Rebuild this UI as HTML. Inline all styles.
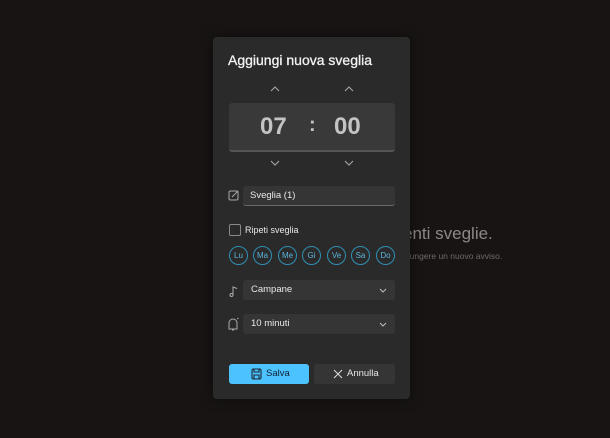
<!DOCTYPE html>
<html><head><style>
body{margin:0;width:610px;height:438px;background:#181414;overflow:hidden;font-family:"Liberation Sans",sans-serif;position:relative}
.a{position:absolute}
.dlg{left:213px;top:37px;width:197px;height:362px;background:#2b2a2a;border-radius:4px;box-shadow:0 0 12px rgba(0,0,0,.5)}
.inp{background:#363535;border-radius:3px;border-bottom:1px solid #6a6a6a;color:#e8e8e8;font-size:9.5px;box-sizing:border-box;padding-left:8px;line-height:20px}
.day{width:17px;height:17px;border:1px solid #2f8fb5;border-radius:50%;color:#5ab5dc;font-size:8px;text-align:center;line-height:17px;top:246px}
</style></head><body>
<div class="a" style="left:403px;top:224px;font-size:17px;color:#8c8888">enti sveglie.</div>
<div class="a" style="left:403px;top:251px;font-size:8.5px;color:#6e6a6a">giungere un nuovo avviso.</div>
<div class="a dlg"></div>
<div class="a" style="left:228px;top:52px;font-size:14px;color:#f2f2f2;-webkit-text-stroke:0.3px #f2f2f2">Aggiungi nuova sveglia</div>
<svg class="a" style="left:0;top:0" width="610" height="438">
<g fill="none" stroke="#aaa" stroke-width="1">
<path d="M271 91l4-4 4 4M345 91l4-4 4 4M271 161l4 4 4-4M345 161l4 4 4-4"/>
<rect x="229" y="191" width="9" height="9" rx="1.5"/><path d="M232 197l6-6" />
<path d="M233 295v-8l4 1.5" /><circle cx="231.5" cy="295" r="1.5"/>
<path d="M229 329v-6a4 4 0 0 1 8 0v6zM232 330h2M237 319l1.5-1"/>
</g>
</svg>
<div class="a" style="left:229px;top:103px;width:166px;height:47px;background:#3a3939;border-bottom:2px solid #555;border-radius:3px"></div>
<div class="a" style="left:260px;top:113px;font-size:24px;font-weight:bold;color:#c4c4c4">07</div>
<div class="a" style="left:309px;top:114px;font-size:20px;font-weight:bold;color:#c4c4c4">:</div>
<div class="a" style="left:334px;top:113px;font-size:24px;font-weight:bold;color:#c4c4c4">00</div>
<div class="a inp" style="left:243px;top:186px;width:152px;height:20px;padding-left:7px">Sveglia (1)</div>
<div class="a" style="left:229px;top:224px;width:10px;height:10px;border:1px solid #8a8a8a;border-radius:2px"></div>
<div class="a" style="left:245px;top:225px;font-size:9px;color:#e8e8e8">Ripeti sveglia</div>
<div class="a day" style="left:229px">Lu</div>
<div class="a day" style="left:253px">Ma</div>
<div class="a day" style="left:278px">Me</div>
<div class="a day" style="left:302px">Gi</div>
<div class="a day" style="left:327px">Ve</div>
<div class="a day" style="left:351px">Sa</div>
<div class="a day" style="left:376px">Do</div>
<div class="a inp" style="left:243px;top:280px;width:152px;height:20px;border:none">Campane</div>
<div class="a inp" style="left:243px;top:314px;width:152px;height:20px;border:none">10 minuti</div>
<div class="a" style="left:229px;top:364px;width:80px;height:20px;background:#4cc2ff;border-radius:3px;color:#102030;font-size:9.5px;line-height:20px;padding-left:37px;box-sizing:border-box">Salva</div>
<div class="a" style="left:314px;top:364px;width:81px;height:20px;background:#363535;border-radius:3px;color:#e8e8e8;font-size:9.5px;line-height:20px;padding-left:33px;box-sizing:border-box">Annulla</div>
<svg class="a" style="left:0;top:0" width="610" height="438"><g fill="none" stroke="#bbb"><path d="M380 289l3 3 3-3M380 323l3 3 3-3"/></g><g fill="none" stroke="#ddd"><path d="M334 370l8 8M342 370l-8 8"/></g><g fill="none" stroke="#1a2630" stroke-width="1.1"><rect x="252" y="369" width="9" height="10" rx="1.5"/><path d="M254 369v3h5v-3M254 379v-4h5v4"/></g></svg>
</body></html>
